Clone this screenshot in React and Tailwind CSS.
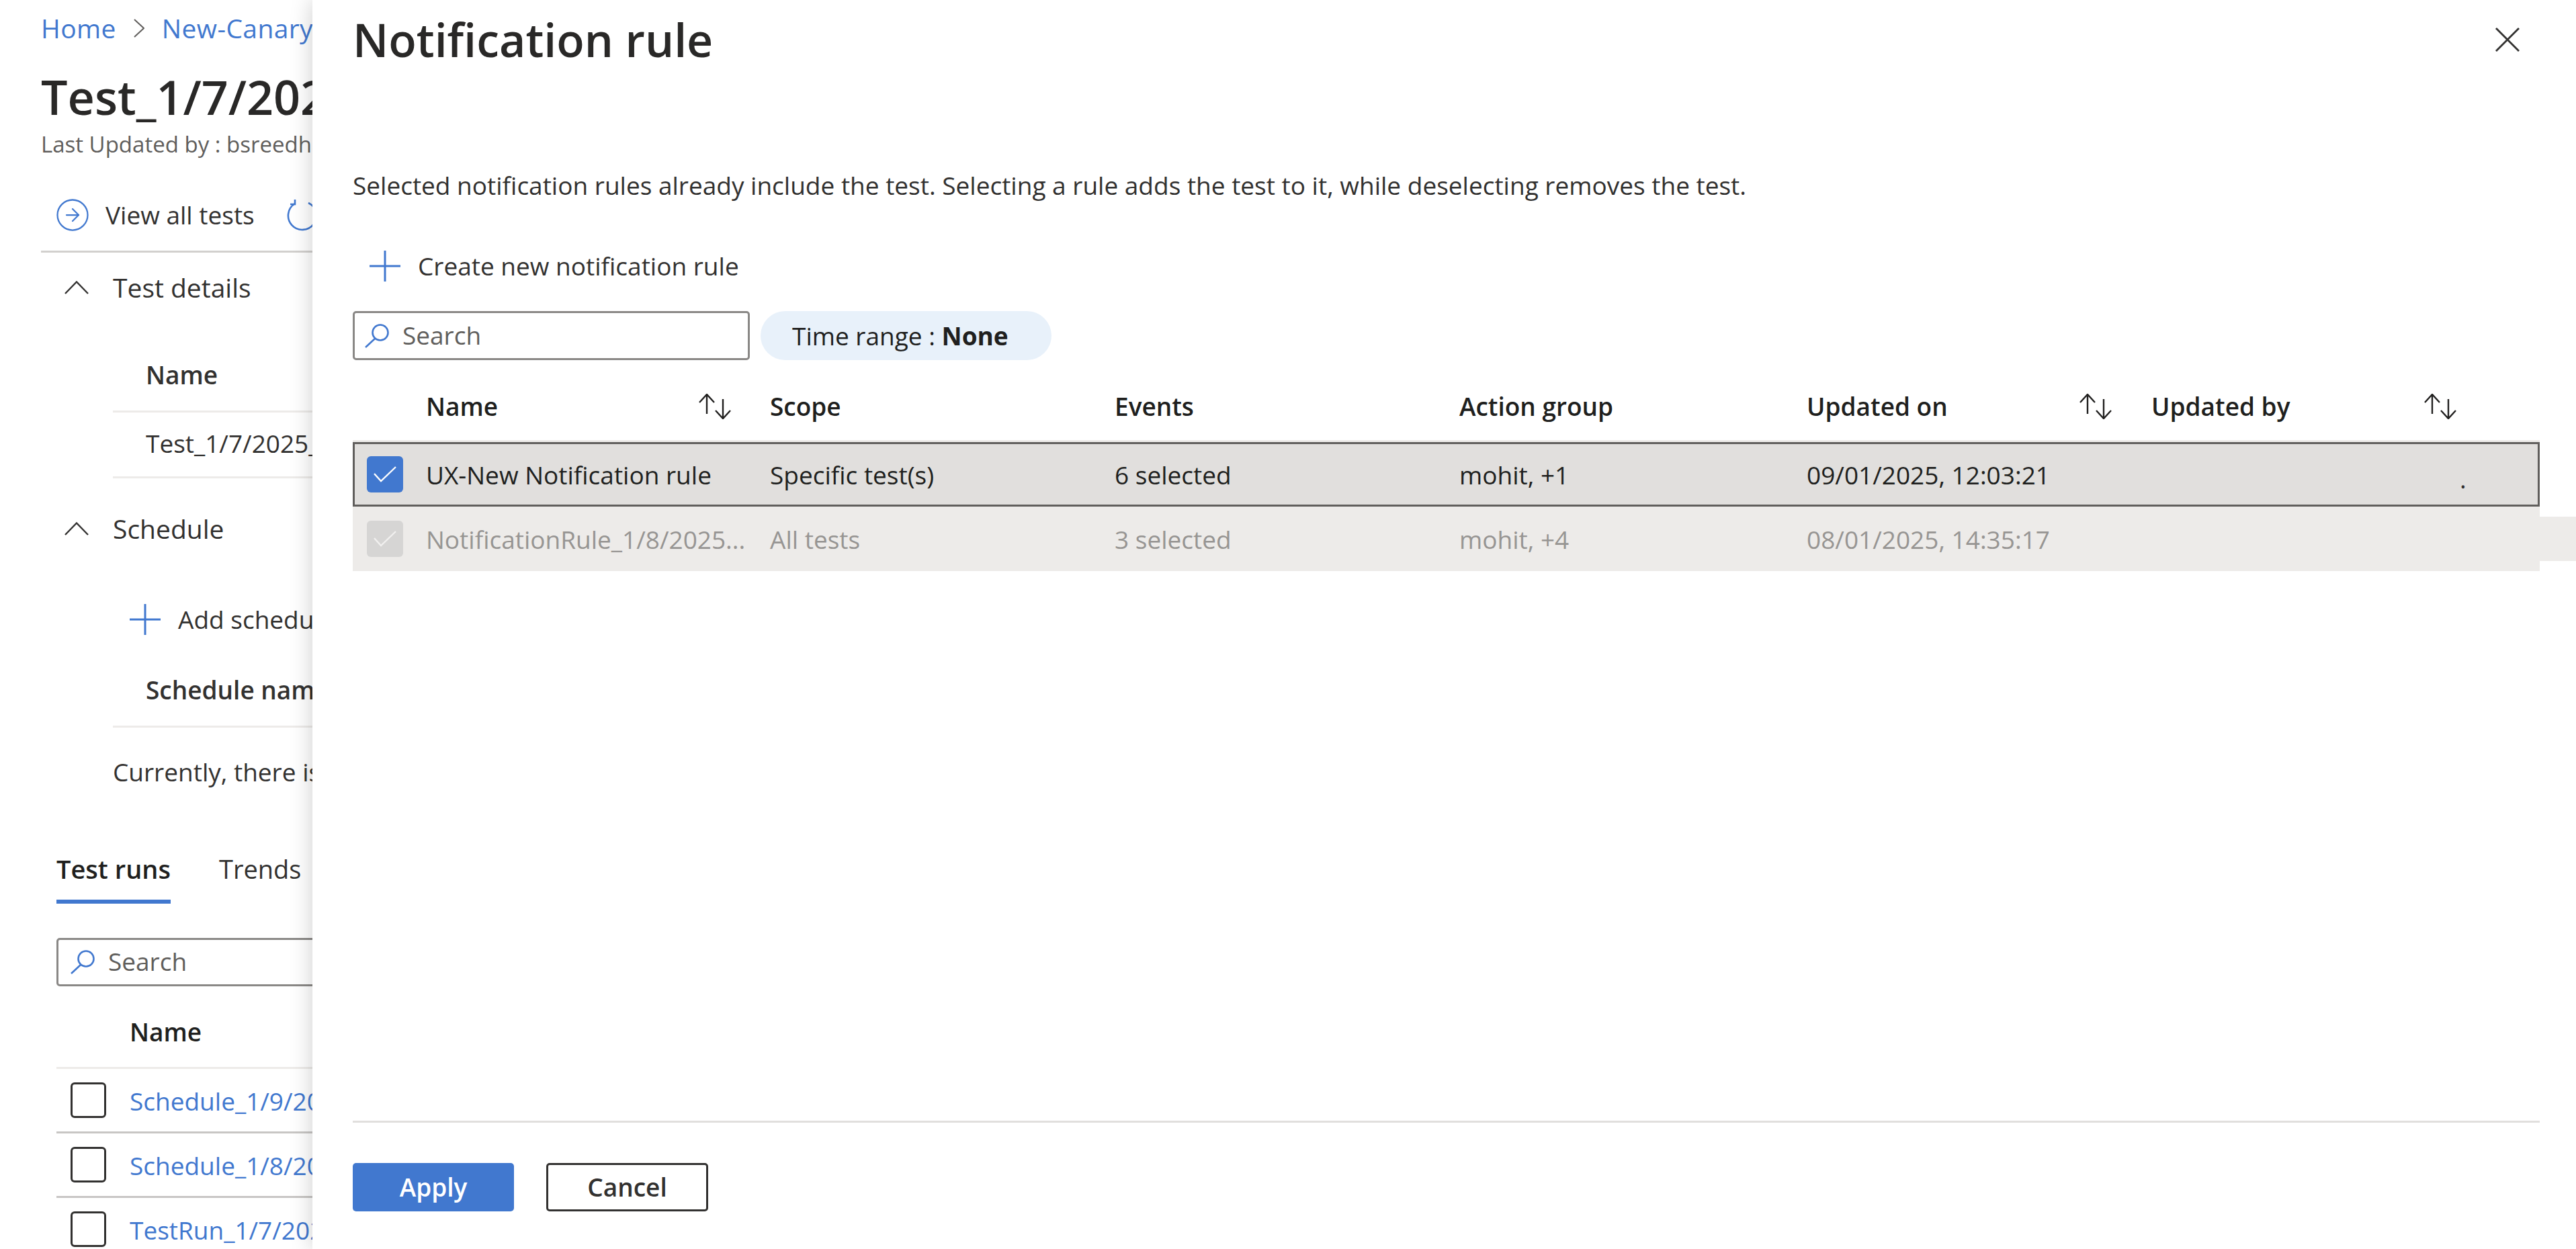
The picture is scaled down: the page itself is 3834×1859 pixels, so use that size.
import { CircleArrowRight } from 'lucide-react';

const PlusIcon = ({ className }) => (
  <svg viewBox="0 0 46 46" className={className} fill="none" stroke="#4178cf" strokeWidth="3">
    <path d="M23 0v46M0 23h46" />
  </svg>
);

const ChevronUp = () => (
  <svg viewBox="0 0 36 20" className="w-[36px] h-[20px] shrink-0" fill="none" stroke="#323130" strokeWidth="2.4">
    <path d="M1 19 18 1.5 35 19" />
  </svg>
);

const SearchIcon = () => (
  <svg viewBox="0 0 36 36" className="w-[36px] h-[36px] shrink-0" fill="none" stroke="#4178cf" strokeWidth="2.6">
    <circle cx="23" cy="13" r="11.5" />
    <path d="M15 22 1 35" />
  </svg>
);

const SortIcon = () => (
  <svg viewBox="0 0 50 38" className="w-[50px] h-[38px] shrink-0" fill="none" stroke="#201f1e" strokeWidth="2.4">
    <path d="M13 1v29M2 13 13 1l11 12" />
    <path d="M37 8v29M26 25l11 12 11-12" />
  </svg>
);

const Check = ({ color = '#fff' }) => (
  <svg viewBox="0 0 34 24" className="w-[34px] h-[24px]" fill="none" stroke={color} strokeWidth="2.4">
    <path d="M1 11 11 22 33 1" />
  </svg>
);

const EmptyBox = () => (
  <span className="w-[53px] h-[53px] shrink-0 rounded-[6px] border-[3px] border-[#323130] bg-white" />
);

const SectionHead = ({ label }) => (
  <div className="flex items-center h-[60px] pl-[35px] gap-[36px] text-[39px] text-[#323130]">
    <ChevronUp />
    <span>{label}</span>
  </div>
);

function BackgroundPage() {
  const runs = ['Schedule_1/9/2025', 'Schedule_1/8/2025', 'TestRun_1/7/2025'];
  return (
    <div className="w-[1400px] pl-[61px] text-[37px] text-[#323130]">
      <div className="flex items-center h-[84px] text-[39px] tracking-[0.01em] text-[#4178cf]">
        <span>Home</span>
        <svg viewBox="0 0 16 28" className="w-[16px] h-[28px] ml-[26px] mr-[26px]" fill="none" stroke="#605e5c" strokeWidth="2">
          <path d="M1 1l14 13L1 27" />
        </svg>
        <span className="whitespace-nowrap">New-Canary</span>
      </div>
      <div className="flex items-center h-[80px] mt-[20px] text-[70px] font-semibold whitespace-nowrap text-[#292827]">Test_1/7/2025</div>
      <div className="flex items-center h-[40px] mt-[11px] text-[33px] text-[#605e5c] whitespace-nowrap">Last Updated by : bsreedhar</div>

      <div className="flex items-center h-[60px] mt-[55px] pl-[20px]">
        <CircleArrowRight className="w-[54px] h-[54px] text-[#4178cf] shrink-0" strokeWidth={1} />
        <span className="ml-[22px] whitespace-nowrap">View all tests</span>
        <svg viewBox="0 0 48 48" className="w-[48px] h-[48px] ml-[46px] shrink-0" fill="none" stroke="#4178cf" strokeWidth="2.6">
          <path d="M14 7A21 21 0 1 0 34 6" />
          <path d="M14 1v7H7" />
        </svg>
      </div>
      <div className="h-[3px] bg-[#d2d0ce] mt-[23px]" />

      <div className="mt-[22px]"><SectionHead label="Test details" /></div>
      <div className="ml-[107px] mt-[47px]">
        <div className="flex items-center h-[109px] pl-[49px] border-b-[3px] border-[#edebe9] font-semibold">Name</div>
        <div className="flex items-center h-[98px] pl-[49px] pb-[3px] border-b-[3px] border-[#edebe9] whitespace-nowrap">Test_1/7/2025_</div>
      </div>

      <div className="mt-[45px]"><SectionHead label="Schedule" /></div>
      <div className="flex items-center h-[60px] mt-[75px] pl-[132px] whitespace-nowrap">
        <PlusIcon className="w-[46px] h-[46px] shrink-0" />
        <span className="ml-[26px]">Add schedule</span>
      </div>
      <div className="ml-[107px] mt-[22px] pl-[49px] flex items-center h-[109px] border-b-[3px] border-[#edebe9] font-semibold whitespace-nowrap">Schedule name</div>
      <div className="flex items-center h-[60px] mt-[36px] pl-[107px] whitespace-nowrap">Currently, there is no schedule</div>

      <div className="pl-[23px]">
        <div className="flex gap-[72px] mt-[82px] h-[88px] text-[38px]">
          <div className="relative flex items-center pb-[20px] font-semibold text-[#201f1e] h-[84px]">
            Test runs
            <span className="absolute left-0 right-0 bottom-0 h-[6px] bg-[#4178cf]" />
          </div>
          <div className="flex items-center pb-[20px] h-[84px]">Trends</div>
        </div>
        <div className="flex items-center h-[72px] mt-[47px] pl-[18px] gap-[20px] border-[3px] border-[#8a8886] rounded-[5px] text-[#605e5c]">
          <SearchIcon />
          <span className="-mt-[2px]">Search</span>
        </div>
        <div className="flex items-center h-[123px] pt-[16px] pl-[109px] border-b-[3px] border-[#edebe9] font-semibold text-[#201f1e]">Name</div>
        {runs.map((run) => (
          <div key={run} className="flex items-center h-[96px] pl-[21px] gap-[35px] border-b-[3px] border-[#c8c6c4] text-[#4178cf] whitespace-nowrap">
            <EmptyBox />
            <span className="mt-[3px]">{run}</span>
          </div>
        ))}
      </div>
    </div>
  );
}

const Row = ({ name, scope, events, group, updated, disabled, selected, children }) => (
  <div
    className={`relative grid grid-cols-[109px_512px_513px_513px_517px_513px_1fr] items-center h-[96px] ${
      selected ? 'bg-[#e1dfdd] text-[#201f1e] outline-[3px] -outline-offset-[3px] outline-[#605e5c]' : 'bg-[#edebe9] text-[#979593]'
    }`}
  >
    <span className={`ml-[21px] w-[54px] h-[54px] rounded-[6px] flex items-center justify-center ${disabled ? 'bg-[#d6d5d4]' : 'bg-[#4178cf]'}`}>
      <Check color={disabled ? '#f1f0ef' : '#ffffff'} />
    </span>
    <span className="mt-[2px] whitespace-nowrap">{name}</span>
    <span className="mt-[2px]">{scope}</span>
    <span className="mt-[2px]">{events}</span>
    <span className="mt-[2px]">{group}</span>
    <span className="mt-[2px]">{updated}</span>
    {children}
  </div>
);

const HeadCell = ({ label, sortable }) => (
  <div className="flex items-center font-semibold text-[#201f1e]">
    <span className="w-[405px] shrink-0">{label}</span>
    {sortable && <SortIcon />}
  </div>
);

export default function App() {
  return (
    <div className="relative w-[3834px] h-[1859px] overflow-hidden bg-white font-['Open_Sans',sans-serif]">
      <BackgroundPage />

      <div className="absolute top-0 bottom-0 right-0 left-[465px] flex flex-col bg-white pl-[60px] pr-[54px] pb-[56px] text-[37px] text-[#323130] shadow-[0_0_32px_rgba(0,0,0,0.2)]">
        <div className="flex items-center justify-between h-[118px] pr-[30px]">
          <h1 className="text-[68px] font-semibold text-[#292827]">Notification rule</h1>
          <svg viewBox="0 0 36 36" className="w-[36px] h-[36px]" fill="none" stroke="#323130" strokeWidth="2.8">
            <path d="M1 1l34 34M35 1 1 35" />
          </svg>
        </div>

        <p className="h-[60px] mt-[128px] flex items-center whitespace-nowrap">
          Selected notification rules already include the test. Selecting a rule adds the test to it, while deselecting removes the test.
        </p>

        <div className="flex items-center h-[60px] mt-[60px] pl-[25px]">
          <PlusIcon className="w-[46px] h-[46px] shrink-0" />
          <span className="ml-[26px]">Create new notification rule</span>
        </div>

        <div className="flex gap-[16px] mt-[37px] h-[73px]">
          <div className="flex items-center w-[591px] pl-[15px] gap-[20px] border-[3px] border-[#8a8886] rounded-[5px] text-[#605e5c]">
            <SearchIcon />
            <span className="-mt-[2px]">Search</span>
          </div>
          <div className="flex items-center w-[433px] pl-[47px] rounded-full bg-[#e8f1fa] text-[#201f1e] whitespace-nowrap">
            Time range :&nbsp;<b className="font-bold">None</b>
          </div>
        </div>

        <div className="grid grid-cols-[109px_512px_513px_513px_517px_513px_1fr] items-center h-[98px] mt-[24px] pb-[6px] border-b-[3px] border-[#edebe9]">
          <span />
          <HeadCell label="Name" sortable />
          <HeadCell label="Scope" />
          <HeadCell label="Events" />
          <HeadCell label="Action group" />
          <HeadCell label="Updated on" sortable />
          <div className="col-span-1 -mr-[200px]"><HeadCell label="Updated by" sortable /></div>
        </div>

        <Row selected name="UX-New Notification rule" scope="Specific test(s)" events="6 selected" group="mohit, +1" updated="09/01/2025, 12:03:21">
          <span className="absolute left-[3136px] top-[36px] leading-none text-[#323130]">.</span>
        </Row>
        <Row disabled name="NotificationRule_1/8/2025..." scope="All tests" events="3 selected" group="mohit, +4" updated="08/01/2025, 14:35:17">
          <span className="absolute left-full top-[15px] bottom-[15px] w-[54px] bg-[#edebe9]" />
        </Row>

        <div className="flex-1" />

        <div className="flex gap-[48px] pt-[60px] border-t-[3px] border-[#e1dfdd]">
          <button className="w-[240px] h-[72px] rounded-[5px] bg-[#4178cf] text-white font-semibold">Apply</button>
          <button className="w-[241px] h-[72px] rounded-[5px] border-[3px] border-[#323130] bg-white font-semibold">Cancel</button>
        </div>
      </div>
    </div>
  );
}
